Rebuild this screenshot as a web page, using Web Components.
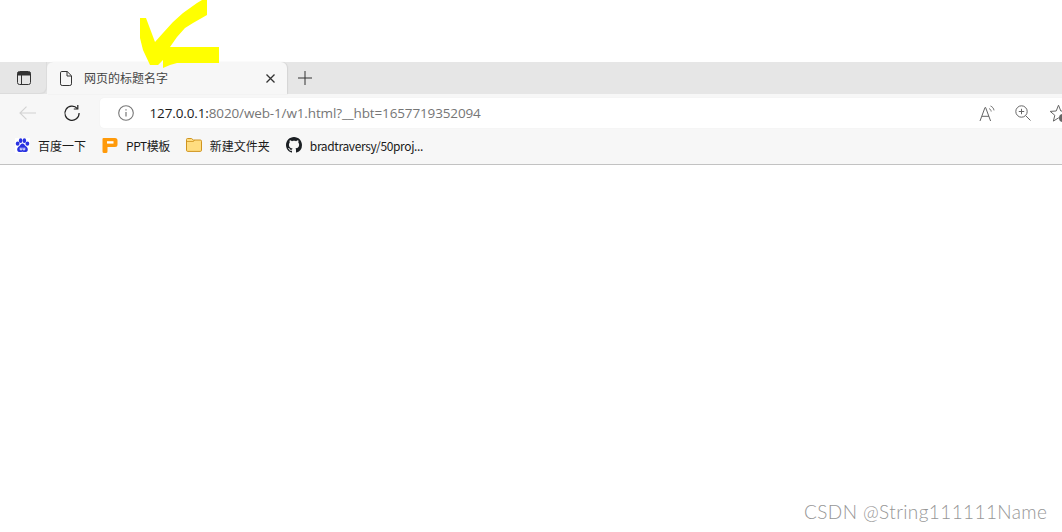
<!DOCTYPE html>
<html><head><meta charset="utf-8"><style>
html,body{margin:0;padding:0;background:#fff;width:1062px;height:532px;overflow:hidden}
body{font-family:"Open Sans","Noto Sans CJK SC",sans-serif;position:relative}
</style></head><body>
<browser-window>
  <browser-tab slot="tab">网页的标题名字</browser-tab>
  <bookmark-item slot="bm" icon="baidu">百度一下</bookmark-item>
  <bookmark-item slot="bm" icon="ppt" style="--ls:-.45px">PPT模板</bookmark-item>
  <bookmark-item slot="bm" icon="folder">新建文件夹</bookmark-item>
  <bookmark-item slot="bm" icon="github" style="--ls:-.37px">bradtraversy/50proj...</bookmark-item>
</browser-window>
<scribble-mark></scribble-mark>
<water-mark>CSDN @String111111Name</water-mark>
<script>
function def(name,html,init){customElements.define(name,class extends HTMLElement{
  constructor(){super();this.attachShadow({mode:'open'}).innerHTML=html;}
  connectedCallback(){if(init)init(this);}
});}
def('browser-window',`<style>
:host{display:block;width:1062px;height:532px;padding-top:62px;box-sizing:border-box;overflow:hidden}
.strip{height:32px;background:#e6e6e6;display:flex;align-items:stretch}
.side{width:47px;display:flex;align-items:center;justify-content:center;box-sizing:border-box;padding-left:1px;border-radius:0 0 6px 0;box-shadow:inset -1px -1px 0 #dcdcdc}
.plus{width:36px;display:flex;align-items:center;justify-content:center}
.bar{height:36px;background:#f7f7f7;display:flex;align-items:center;padding-top:2px;box-sizing:border-box}
.back{width:56px;display:flex;justify-content:center;margin-top:-1px}
.reload{width:32px;display:flex;justify-content:center}
.addr{margin-left:12px;flex:1;height:30px;background:#fff;border-radius:4px 0 0 4px;display:flex;align-items:center;box-shadow:0 0 1px #e4e4e4;min-width:0;position:relative}
.info{margin-left:18px;width:16px;display:flex;margin-right:15.5px}
.url{font:13.5px "Open Sans",sans-serif;color:#767676;white-space:nowrap;letter-spacing:-.13px}
.url b{font-weight:400;color:#1c1c1c}
.tools{margin-left:auto;margin-right:-7.5px;display:flex;align-items:center;gap:19px;flex:none;height:24px}
.tools svg{flex:none}
.bms{background:#f7f7f7;border-bottom:1px solid #c2c2c2;display:flex;align-items:center;padding:0 0 4px 14px;gap:16px;box-sizing:content-box;height:30px}
</style>
<div class="strip">
  <div class="side"><svg width="14" height="14" viewBox="0 0 14 14" fill="none" stroke="#333" stroke-width="1"><rect x=".5" y=".5" width="13" height="13" rx="2"/><path d="M1 1.5h12v2.5H1z" fill="#333"/><path d="M4.5 4v9.5"/></svg></div>
  <slot name="tab"></slot>
  <div class="plus"><svg width="14" height="14" viewBox="0 0 14 14" stroke="#333" stroke-width="1"><path d="M7 0v14M0 7h14"/></svg></div>
</div>
<div class="bar">
  <div class="back"><svg width="18" height="14" viewBox="0 0 18 14" fill="none" stroke="#d2d2d2" stroke-width="1.1"><path d="M1 7h16M7.5 .7 1 7l6.5 6.3"/></svg></div>
  <div class="reload"><svg width="18" height="18" viewBox="0 0 18 18" fill="none" stroke="#222" stroke-width="1.2"><path d="M14.4 4.6A7.1 7.1 0 1 0 16.1 9"/><path d="M14.8 1v4h-4"/></svg></div>
  <div class="addr">
    <div class="info"><svg width="16" height="16" viewBox="0 0 16 16" fill="none" stroke="#777" stroke-width="1.1"><circle cx="8" cy="8" r="7.3"/><path d="M8 7v4.6M8 4.2v1.3" stroke-width="1.2"/></svg></div>
    <div class="url"><b>127.0.0.1:</b>8020/web-1/w1.html?__hbt=1657719352094</div>
    <div class="tools">
      <svg width="17" height="17" viewBox="0 0 17 17" fill="none" stroke="#666" stroke-width="1"><path d="M1 16 6 2.500h.6L11.600 16M3 11.300h7"/><path d="M10 3.500c1.300.6 2 1.600 2.200 3M11.500 1c2.200.9 3.200 2.400 3.500 4.400" stroke-width=".9"/></svg>
      <svg width="16" height="16" viewBox="0 0 16 16" fill="none" stroke="#666" stroke-width="1"><circle cx="6.500" cy="6.500" r="5.700"/><path d="M3.800 6.500h5.400M6.500 3.800v5.400M10.700 10.700l4.800 4.800"/></svg>
      <svg width="20" height="20" viewBox="0 0 20 20" fill="none" stroke="#666" stroke-width="1"><path d="M8.500 2.200 10.800 8l6 .4-4.600 3.900 1.400 5.800-5.100-3.200-5.100 3.200 1.400-5.800L.2 8.400l6-.4z"/><circle cx="13" cy="15" r="4" fill="#666" stroke="none"/></svg>
    </div>
  </div>
</div>
<div class="bms"><slot name="bm"></slot></div>`);
def('browser-tab',`<style>
:host{display:flex;align-items:center;width:240px;height:32px;background:#f7f7f7;border-radius:6px 6px 0 0;box-sizing:border-box;padding-left:13px;box-shadow:1px 0 1px #d4d4d4;font:12px "Noto Sans CJK SC",sans-serif;color:#454545}
.t{margin-left:12px;flex:1;position:relative;top:-1px}
.x{margin-right:12px;display:flex}
</style>
<svg width="12" height="15" viewBox="0 0 12 15" fill="none" stroke="#333" stroke-width="1"><path d="M1.800.5h5.400L11.500 4.800v8a1.700 1.700 0 0 1-1.700 1.700H2.200A1.700 1.700 0 0 1 .5 12.800V1.800A1.300 1.300 0 0 1 1.800.5zM7 .5v4.500h4.500"/></svg>
<span class="t"><slot></slot></span>
<span class="x"><svg width="9" height="9" viewBox="0 0 9 9" stroke="#333" stroke-width="1.300"><path d="M.5.500l8 8M8.500.500l-8 8"/></svg></span>`);
const icons={
 baidu:`<svg width="15" height="15" viewBox="0 0 16 16"><rect width="16" height="16" fill="#fff"/><g fill="#2932e1"><ellipse cx="2.800" cy="6" rx="2" ry="2.300"/><ellipse cx="6" cy="2.800" rx="1.900" ry="2.500"/><ellipse cx="10" cy="2.800" rx="1.900" ry="2.500"/><ellipse cx="13.200" cy="6" rx="2" ry="2.300"/><path d="M8 5.800c-1.900 0-2.300 1.900-3.600 3C2.900 10 2 11.300 2.400 13c.4 1.800 2.200 2.200 3.400 2 1-.1 1.400-.4 2.200-.4s1.200.3 2.200.4c1.200.2 3-.2 3.400-2 .4-1.700-.5-3-2-4.200C10.300 7.700 9.900 5.800 8 5.800z"/></g><path d="M5.600 10.300v2.300h1.700v-2.300M8.700 10.300v2.300h1.700v-2.300" fill="none" stroke="#fff" stroke-width=".9"/></svg>`,
 ppt:`<svg width="16" height="16" viewBox="0 0 16 16"><path d="M1.500 1H13a2.500 2.500 0 0 1 2.500 2.500v4A2.500 2.500 0 0 1 13 10H5.500v4.500a1.500 1.500 0 0 1-1.500 1.500H2a1.500 1.500 0 0 1-1.500-1.500V2A1 1 0 0 1 1.500 1z" fill="#ff9a0a"/><rect x="5" y="4.200" width="6.500" height="2.400" fill="#fff"/></svg>`,
 folder:`<svg width="16" height="14" viewBox="0 0 16 14"><path d="M1.500.5h4L7.300 2h7a1.200 1.200 0 0 1 1.200 1.200v9a1.200 1.200 0 0 1-1.200 1.200H1.700A1.200 1.200 0 0 1 .5 12.200V1.500a1 1 0 0 1 1-1z" fill="#ffdd80" stroke="#cf9420"/><path d="M1 3.500h6.500l1-1.500" fill="none" stroke="#cf9420" stroke-width=".8"/></svg>`,
 github:`<svg width="16" height="16" viewBox="0 0 16 16"><path fill="#1b1f23" d="M8 0C3.580 0 0 3.580 0 8c0 3.540 2.290 6.530 5.470 7.590.4.070.55-.17.550-.38 0-.19-.010-.82-.010-1.490-2.010.370-2.530-.490-2.690-.940-.090-.230-.480-.940-.820-1.130-.280-.150-.680-.520-.010-.530.630-.010 1.080.580 1.230.820.720 1.210 1.870.870 2.330.660.070-.520.280-.870.510-1.070-1.780-.200-3.640-.890-3.640-3.950 0-.870.310-1.590.820-2.150-.080-.200-.360-1.020.080-2.120 0 0 .670-.210 2.200.820.640-.180 1.320-.270 2-.270s1.360.090 2 .270c1.530-1.040 2.200-.820 2.200-.820.440 1.100.160 1.920.080 2.120.510.560.820 1.270.820 2.150 0 3.070-1.870 3.750-3.650 3.950.290.250.540.730.540 1.480 0 1.070-.010 1.930-.010 2.200 0 .210.150.460.550.380A8.010 8.010 0 0 0 16 8c0-4.420-3.580-8-8-8z"/></svg>`};
def('bookmark-item',`<style>
:host{display:flex;align-items:center;gap:8px;font:12px "Noto Sans CJK SC","Open Sans",sans-serif;color:#1a1a1a;white-space:nowrap;height:20px;letter-spacing:var(--ls,0)}
#i{display:flex;width:16px;justify-content:flex-end}
</style><span id="i"></span><span><slot></slot></span>`,el=>{el.shadowRoot.getElementById('i').innerHTML=icons[el.getAttribute('icon')];});
def('scribble-mark',`<style>:host{display:block;position:absolute;left:0;top:0;width:230px;height:75px;pointer-events:none}svg{display:block}</style>
<svg width="230" height="75" viewBox="0 0 230 75"><path fill="#ffff00" d="M140 18L146 18L155 42L163 33L173 22L183 13L197 3L202 0L207 0L207 15L193 23L185 28L177 37L170 47L219 47L219 63L177 63L170 65L163 68L163 60L158 65L150 65L143 50L140 38Z"/></svg>`);
def('water-mark',`<style>:host{display:block;position:absolute;left:804px;top:500px;font:300 19px "Lato","Open Sans",sans-serif;letter-spacing:.4px;color:#969696;white-space:nowrap;line-height:24px}</style><slot></slot>`);
</script>
</body></html>
